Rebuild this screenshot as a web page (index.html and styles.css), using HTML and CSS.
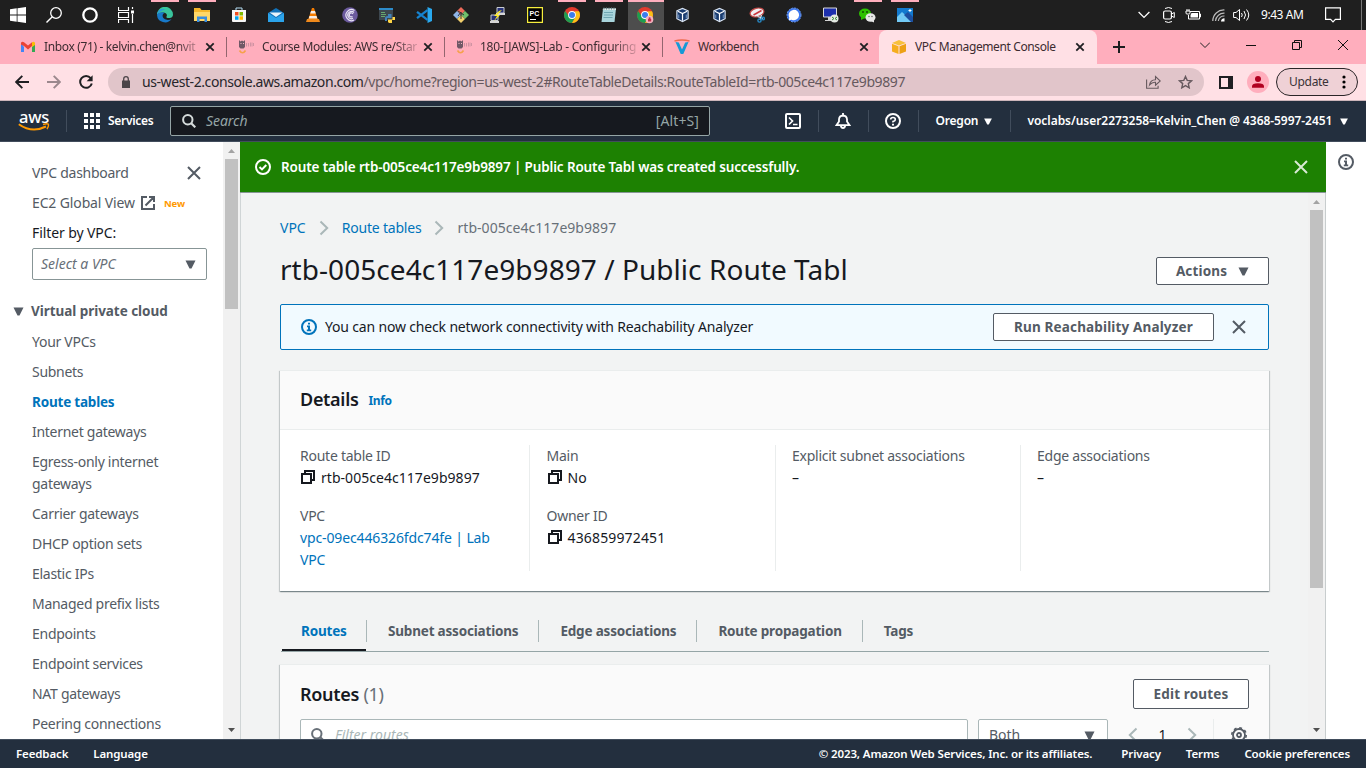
FILE: index.html
```html
<!DOCTYPE html>
<html lang="en">
<head>
<meta charset="utf-8">
<title>VPC Management Console</title>
<link rel="stylesheet" href="styles.css">
</head>
<body>
<svg class="defs" width="0" height="0">
  <defs>
    <symbol id="x" viewBox="0 0 16 16"><path d="M2 2l12 12M14 2L2 14" fill="none" stroke="currentColor" stroke-width="2"/></symbol>
    <symbol id="tabx" viewBox="0 0 10 10"><path d="M1.3 1.3l7.4 7.4M8.7 1.3L1.3 8.7" fill="none" stroke="currentColor" stroke-width="1.8"/></symbol>
    <symbol id="tri" viewBox="0 0 10 9"><path d="M0 .5h10L6 8.500H4z" fill="currentColor"/></symbol>
    <symbol id="chev" viewBox="0 0 10 16"><path d="M1.500 1.500L8.200 8l-6.700 6.500" fill="none" stroke="currentColor" stroke-width="2"/></symbol>
    <symbol id="info" viewBox="0 0 16 16"><circle cx="8" cy="8" r="7" fill="none" stroke="currentColor" stroke-width="2"/><path d="M7 3.700h2v1.800H7zM6 6.500h3v4h1.200v1.700H5.800v-1.700H7V8.200H6z" fill="currentColor"/></symbol>
    <symbol id="copy" viewBox="0 0 14 14"><path d="M1 4h9v9H1zM4 4V1h9v9h-3" fill="none" stroke="currentColor" stroke-width="2"/></symbol>
    <symbol id="mag" viewBox="0 0 14 14"><circle cx="5.800" cy="5.800" r="4.700" fill="none" stroke="currentColor" stroke-width="2"/><path d="M9 9l4.300 4.300" stroke="currentColor" stroke-width="2.200"/></symbol>
    <symbol id="vbox" viewBox="0 0 16 16"><path d="M2 3.500L8 1l6 2.500v8.500L8 15l-6-3z" fill="#173a6e" stroke="#dbe6f5" stroke-width="1.200"/><path d="M3 4l5 2.500L13 4M8 6.500V14" stroke="#fff" stroke-width="1.300" fill="none"/><path d="M4 7.500v4M12 7.500v4" stroke="#7f9fcb"/></symbol>
    <symbol id="chrome" viewBox="0 0 16 16"><circle cx="8" cy="8" r="8" fill="#e33b2e"/><path d="M1.100 4A8 8 0 0 0 8 16l3.500-6L8 8H4z" fill="#1e9e50"/><path d="M15 4.200A8 8 0 0 1 8 16l3.500-6L11 4.200z" fill="#fbc116"/><circle cx="8" cy="8" r="3.900" fill="#fff"/><circle cx="8" cy="8" r="3" fill="#3b7ded"/></symbol>
    <symbol id="awscat" viewBox="0 0 16 16"><path d="M1 1l1.500 1.500L4 1.500 5.500 2.500 7 1v7L5.500 9.500h-3L1 8z" fill="#705866"/><path d="M2.500 4.500h1M5 4.500h1" stroke="#f0b8c4"/><path d="M8.500 4v3.500M10.500 4v3.500M12.500 3.500v4M14 3.500v4M15.500 4v3" stroke="#d093a3" fill="none"/><path d="M1.500 11.500q3 4.500 6 0" stroke="#f5a14a" stroke-width="1.700" fill="none"/></symbol>
  </defs>
</svg>

<header class="taskbar">
  <div class="task sys"><svg width="16" height="16" viewBox="0 0 16 16"><path d="M0 2.300L6.700 1.300V7.600H0zM7.500 1.200L16 0v7.600H7.500zM0 8.400h6.700v6.300L0 13.700zM7.500 8.400H16V16l-8.500-1.200z" fill="#fff"/></svg></div>
  <div class="task sys"><svg width="16" height="16" viewBox="0 0 16 16"><circle cx="10" cy="6" r="5.300" fill="none" stroke="#fff" stroke-width="1.300"/><path d="M6.300 9.700L.5 15.500" stroke="#fff" stroke-width="1.400"/></svg></div>
  <div class="task sys"><svg width="16" height="16" viewBox="0 0 16 16"><circle cx="8" cy="8" r="6.700" fill="none" stroke="#fff" stroke-width="2.300"/></svg></div>
  <div class="task sys"><svg width="16" height="16" viewBox="0 0 16 16"><path d="M.5 0v3.500h10V0M.5 16v-3.500h10V16M.5 5.500h10v5H.5zM14.500 0v2M14.500 7v9" fill="none" stroke="#fff" stroke-width="1.200"/><path d="M13 3.500h3v3h-3z" fill="#fff"/></svg></div>
  <div class="apps">
    <div class="task open"><svg width="16" height="16" viewBox="0 0 16 16"><path d="M0 8a8 8 0 0 1 16-.5c0 3-2.500 3.500-4.500 3.500S9 10 9.700 9.200C10.500 7 8.500 5.500 6 5.500S1 6.500 0 8z" fill="#39c39c"/><path d="M0 8C.5 3.500 4 1 8 2.500 5 3 2 5 0 8z" fill="#2a9bd8"/><path d="M0 8c1-2.500 5-3.700 8-2-3 .5-3 4-1 5.500 2.500 2 5.500 1.500 7.500.5A8 8 0 0 1 0 8z" fill="#1879c9"/></svg></div>
    <div class="task open"><svg width="16" height="14" viewBox="0 0 16 14"><path d="M0 0h6l1.500 2H16v11H0z" fill="#f5b62b"/><path d="M0 4h16v9H0z" fill="#ffd768"/><path d="M3 14V8.500h10V14h-2.500v-3h-5v3z" fill="#3a8ddd"/></svg></div>
    <div class="task"><svg width="16" height="16" viewBox="0 0 16 16"><path d="M5 4V1h6v3" fill="none" stroke="#b7dff5"/><path d="M1 3h14v11q0 1-1 1H2q-1 0-1-1z" fill="#f5f5f5"/><path d="M4 5h3.500v3.500H4z" fill="#f05022"/><path d="M8.500 5H12v3.500H8.500z" fill="#7fba00"/><path d="M4 9.300h3.500v3.500H4z" fill="#00a4ef"/><path d="M8.500 9.300H12v3.500H8.500z" fill="#ffb900"/></svg></div>
    <div class="task"><svg width="16" height="14" viewBox="0 0 16 14"><path d="M0 5l8-5 8 5v9H0z" fill="#1272b9"/><path d="M1.500 4.500h13L8 9z" fill="#e8f4fc"/><path d="M0 5l8 5 8-5v9H0z" fill="#2ba3ea"/></svg></div>
    <div class="task"><svg width="14" height="16" viewBox="0 0 14 16"><path d="M6 1h2l4 12H2z" fill="#f57c00"/><path d="M5 4h4l.8 2.500H4.200zM3.500 9h7l.8 2.500H2.700z" fill="#f7eee6"/><path d="M1 12h12l1 3H0z" fill="#f08a1c"/></svg></div>
    <div class="task"><svg width="16" height="16" viewBox="0 0 16 16"><circle cx="8" cy="8" r="7.800" fill="#6c5b9e"/><path d="M12.500 3.500A5.500 5.500 0 1 0 12 13M12 5.500A3.600 3.600 0 1 0 11 11.300M11 7a2 2 0 1 0-.5 2.500" fill="none" stroke="#e9e5f5" stroke-width="1.200"/></svg></div>
    <div class="task"><svg width="16" height="15" viewBox="0 0 16 15"><path d="M0 0h14v12H0z" fill="#3d474f"/><path d="M0 0h14v2H0z" fill="#2d8bc9"/><path d="M2 4.500h4M2 6.500h5M2 8.500h4" stroke="#67a86f"/><path d="M9 6h3.500v4H8v3H6v-3q0-2 3-2z" fill="#4282b8"/><path d="M10 15h3v-3h3V9h-2.500v2.500H9V14z" fill="#ffd546"/></svg></div>
    <div class="task"><svg width="16" height="16" viewBox="0 0 16 16"><path d="M11.500 0L16 2v12l-4.500 2z" fill="#29a9ef"/><path d="M1 4.800l10.500 8M1 11.200l10.500-8" stroke="#1683d0" stroke-width="2.300"/></svg></div>
    <div class="task"><svg width="16" height="16" viewBox="0 0 16 16"><path d="M8 0l4 4-4 4-4-4z" fill="#ed6a5a"/><path d="M4 4l4 4-4 4-4-4z" fill="#8fb5e8"/><path d="M12 4l4 4-4 4-4-4z" fill="#6fbf6b"/><path d="M8 8l4 4-4 4-4-4z" fill="#f2cf6c"/><path d="M5 4l6 4M8 5v7M8 5L5 9" stroke="#333"/></svg></div>
    <div class="task"><svg width="16" height="16" viewBox="0 0 16 16"><path d="M7 .5h7v5.500H7zM1 8h7v5.500H1z" fill="#28337b" stroke="#c9cdd1"/><path d="M6 7h9M0 15h9" stroke="#d6d6d6" stroke-width="2"/><path d="M12 3L7 8h3l-6 6 3-5H4l5-5z" fill="#ffec27"/></svg></div>
    <div class="task"><svg class="pc" width="16" height="16" viewBox="0 0 16 16"><path d="M.6 .6h14.800v14.800H.6z" fill="#000" stroke="#f6ee3d" stroke-width="1.200"/><text class="pctext" x="2.500" y="9">PC</text><path d="M3 12.500h6" stroke="#fff"/></svg></div>
    <div class="task open"><svg width="16" height="16"><use href="#chrome"/></svg></div>
    <div class="task open"><svg width="16" height="16" viewBox="0 0 16 16"><path d="M2 1.500h13L13.500 15H.5z" fill="#a9d5dc"/><path d="M2 1.500h13l-.2 1.500h-13z" fill="#e5efee"/><path d="M3 5.500h9M3 8h9M2.500 10.500h9" stroke="#6ea6b2"/><path d="M3 .5v2M5.500 .5v2M8 .5v2M10.500 .5v2M13 .5v2" stroke="#627c83"/></svg></div>
    <div class="task open active"><svg width="17" height="17" viewBox="0 0 17 17"><use href="#chrome" width="16" height="16"/><circle cx="12.500" cy="12.500" r="3.800" fill="#f7b3c0"/><path d="M11 12h3.200v2.500H11z" fill="#c02c4b"/><circle cx="12.600" cy="11.300" r="1.100" fill="#c02c4b"/></svg></div>
    <div class="task"><svg width="15" height="16"><use href="#vbox"/></svg></div>
    <div class="task"><svg width="15" height="16"><use href="#vbox"/></svg></div>
    <div class="task"><svg width="16" height="16" viewBox="0 0 16 16"><ellipse cx="8" cy="5.500" rx="7" ry="4.300" fill="#f1f0f3" stroke="#c44a48" stroke-width="1.200" transform="rotate(-14 8 5.500)"/><path d="M4.500 8l8-4.500" stroke="#c9353c" stroke-width="1.500"/><path d="M8.500 9.500l5.500 2M12.500 8l-1.500 5" stroke="#d3e3ee" stroke-width="1.200"/><circle cx="10.500" cy="13.500" r="1.600" fill="none" stroke="#278ac7" stroke-width="1.400"/><circle cx="14" cy="11.500" r="1.400" fill="none" stroke="#278ac7" stroke-width="1.400"/></svg></div>
    <div class="task"><svg width="16" height="16" viewBox="0 0 16 16"><circle cx="8" cy="8" r="7" fill="#3a76f0" stroke="#6c9bf5" stroke-width="1" stroke-dasharray="2 1"/><path d="M2.800 13.200l.5-2.700A5.200 5.200 0 1 1 5.600 12.700z" fill="#fff"/></svg></div>
    <div class="task"><svg width="16" height="16" viewBox="0 0 16 16"><path d="M.5 1h13v9H.5z" fill="#1d2fad" stroke="#dadada"/><path d="M5 10v3H2v1h8v-4z" fill="#d4d4d4"/><circle cx="11.500" cy="11.500" r="4" fill="#e5e9e3"/><path d="M9 10l2 1.500L9 13M14 10l-2 1.500 2 1.500" stroke="#348a38" fill="none"/></svg></div>
    <div class="task open"><svg width="17" height="15" viewBox="0 0 17 15"><ellipse cx="6" cy="5.500" rx="6" ry="5" fill="#2dc100"/><path d="M2 9v3l4-2z" fill="#2dc100"/><ellipse cx="11.500" cy="9.500" rx="5" ry="4.200" fill="#e8e8e8"/><path d="M15 12v2.500l-3-1.500z" fill="#e8e8e8"/><circle cx="4" cy="4" r=".8"/><circle cx="8" cy="4" r=".8"/><circle cx="10" cy="8.500" r=".7" fill="#555"/><circle cx="13" cy="8.500" r=".7" fill="#555"/></svg></div>
    <div class="task open"><svg width="16" height="14" viewBox="0 0 16 14"><path d="M0 0h16v14H0z" fill="#1279cf"/><path d="M0 9l5-5 11 10H0z" fill="#72c9f4"/><path d="M7 7l4-3 5 5v5h-2z" fill="#1c4fa0"/><path d="M13 1v3M11.500 2.500h3" stroke="#fff"/></svg></div>
  </div>
  <div class="tray">
    <svg width="12" height="8" viewBox="0 0 12 8"><path d="M.6 1L6 6.400 11.400 1" stroke="#fff" stroke-width="1.300" fill="none"/></svg>
    <svg width="12" height="16" viewBox="0 0 12 16"><path d="M2 1.500Q5.500-.5 9 1.500M2 14.500q3.500 2 7 0" fill="none" stroke="#fff"/><rect x=".6" y="4" width="7.800" height="8" rx="1.500" fill="none" stroke="#fff" stroke-width="1.200"/><path d="M8.500 7l2.800-1.500v5L8.500 9" fill="none" stroke="#fff"/></svg>
    <svg width="16" height="12" viewBox="0 0 16 12"><path d="M5 2.500h9.500v7.500H3.500V6M1 2h4M2 0v2M4 0v2M1 2v2q0 1 1 1h2q1 0 1-1V2M14.500 5h1v3h-1" fill="none" stroke="#fff"/><path d="M6.500 4h6.500v4.500H5.500V6z" fill="#fff"/></svg>
    <svg width="13" height="13" viewBox="0 0 13 13"><path d="M.8 12A11 11 0 0 1 12.500 1M3.500 12A8.500 8.500 0 0 1 12.500 4.200M6.300 12A6 6 0 0 1 12.500 7" fill="none" stroke="#bbb" stroke-width="1.200"/><path d="M9 12.500q0-3 3.500-3.200v3.200z" fill="#fff"/></svg>
    <svg width="17" height="14" viewBox="0 0 17 14"><path d="M.6 4.500H3L6.500 1.500v11L3 9.500H.6zM8.500 5q1.500 2 0 4M11 3q3 4 0 8M13.500 1.500q4.500 5.500 0 11" fill="none" stroke="#fff"/></svg>
    <span class="clock">9:43 AM</span>
    <svg class="notif" width="16" height="16" viewBox="0 0 16 16"><path d="M.6 .8h14.800v11.600h-5L8 14.800l-2.400-2.400h-5z" fill="none" stroke="#fff" stroke-width="1.200"/></svg>
    <i class="peek"></i>
  </div>
</header>

<div class="tabstrip">
  <div class="tab"><svg class="fav" width="16" height="12" viewBox="0 0 16 12"><path d="M1 2v9h3V6z" fill="#4285f4"/><path d="M15 2v9h-3V6z" fill="#34a853"/><path d="M1 3.500V1.800Q2 0 4 1.300L8 4.500l4-3.200v3.800L8 8.500 4 5z" fill="#ea4335"/><path d="M12 1.300Q14 0 15 1.800V4l-3 2z" fill="#fbbc04"/></svg><span class="title t1">Inbox (71) - kelvin.chen@nvit</span><svg class="tx" width="10" height="10"><use href="#tabx"/></svg></div>
  <div class="tab"><svg class="fav" width="16" height="16"><use href="#awscat"/></svg><span class="title t2">Course Modules: AWS re/Star</span><svg class="tx" width="10" height="10"><use href="#tabx"/></svg></div>
  <div class="tab"><svg class="fav" width="16" height="16"><use href="#awscat"/></svg><span class="title t3">180-[JAWS]-Lab - Configuring</span><svg class="tx" width="10" height="10"><use href="#tabx"/></svg></div>
  <div class="tab last"><svg class="fav" width="16" height="16" viewBox="0 0 16 16"><path d="M1.500 3l3.300.5L8 10.500l3.200-7 3.300-.5L9.300 15H6.700z" fill="#1699d6"/><path d="M.5 2Q8 0 15.500 2" fill="none" stroke="#ef6a4c" stroke-width="1.300"/></svg><span class="title t4">Workbench</span><svg class="tx" width="10" height="10"><use href="#tabx"/></svg></div>
  <div class="tab current"><svg class="fav" width="16" height="16" viewBox="0 0 16 16"><path d="M1 4l7-3 7 3-7 2.500z" fill="#f7c03c"/><path d="M1 4.700l6.500 2.500V15L1 12.500z" fill="#f5ad1f"/><path d="M15 4.700L8.500 7.200V15l6.500-2.500z" fill="#eda016"/></svg><span class="title t5">VPC Management Console</span><svg class="tx" width="10" height="10"><use href="#tabx"/></svg></div>
  <svg class="plus" width="12" height="12" viewBox="0 0 12 12"><path d="M6 0v12M0 6h12" stroke="#1d1d1f" stroke-width="2"/></svg>
  <div class="wincontrols">
    <svg width="10" height="10" viewBox="0 0 10 10"><path d="M0 2.500l5 5 5-5" fill="none" stroke="#222"/></svg>
    <svg width="10" height="10" viewBox="0 0 10 10"><path d="M0 5.500h10" stroke="#111"/></svg>
    <svg width="10" height="10" viewBox="0 0 10 10"><path d="M.5 2.500h7v7h-7zM2.500 2.500v-2h7v7h-2" fill="none" stroke="#111"/></svg>
    <svg width="10" height="10" viewBox="0 0 10 10"><path d="M0 0l10 10M10 0L0 10" stroke="#111"/></svg>
  </div>
</div>

<div class="toolbar">
  <svg class="nav" width="14" height="14" viewBox="0 0 14 14"><path d="M14 7H1.500M7.300 .8L1.200 7l6.100 6.200" fill="none" stroke="#1f1f22" stroke-width="1.900"/></svg>
  <svg class="nav" width="14" height="14" viewBox="0 0 14 14"><path d="M0 7h12.500M6.700 .8L12.800 7l-6.100 6.200" fill="none" stroke="#9b888d" stroke-width="1.900"/></svg>
  <svg class="nav" width="14" height="14" viewBox="0 0 14 14"><path d="M11.700 3.200A5.900 5.900 0 1 0 12.800 8.500" fill="none" stroke="#1f1f22" stroke-width="2"/><path d="M13.600 .2v6H7.600z" fill="#1f1f22"/></svg>
  <div class="address">
    <svg width="8" height="12" viewBox="0 0 8 12"><path d="M0 4.500h8V12H0z" fill="#4c4549"/><path d="M1.700 5V3a2.300 2.300 0 0 1 4.600 0v2" fill="none" stroke="#4c4549" stroke-width="1.300"/></svg>
    <span class="url"><b>us-west-2.console.aws.amazon.com</b>/vpc/home?region=us-west-2#RouteTableDetails:RouteTableId=rtb-005ce4c117e9b9897</span>
    <svg class="share" width="15" height="14" viewBox="0 0 15 14"><path d="M.6 4.500v8.800h11.500v-2.500M3.500 10q.8-5 6-5.200V1.500L14.300 6 9.500 10.200V7.300Q6 7 3.500 10z" fill="none" stroke="#66595e" stroke-width="1.100"/></svg>
    <svg width="15" height="14" viewBox="0 0 15 14"><path d="M7.500 1.500l1.700 3.900 4.300.4-3.200 2.800.9 4.200-3.700-2.200-3.700 2.200.9-4.200L1.500 5.800l4.300-.4z" fill="none" stroke="#66595e" stroke-width="1.400"/></svg>
  </div>
  <svg class="panel" width="14" height="13" viewBox="0 0 14 13"><path d="M1 1h12v11H1z" fill="none" stroke="#1f1f22" stroke-width="2"/><path d="M9 1h4v11H9z" fill="#1f1f22"/></svg>
  <svg class="avatar" width="22" height="22" viewBox="0 0 22 22"><circle cx="11" cy="11" r="11" fill="#ffaebd"/><circle cx="11" cy="8" r="3" fill="#b00020"/><path d="M5 16.800v-1.500q0-3 6-3t6 3v1.500z" fill="#b00020"/></svg>
  <div class="update"><span>Update</span><svg width="4" height="14" viewBox="0 0 4 14"><circle cx="2" cy="2" r="1.600"/><circle cx="2" cy="7" r="1.600"/><circle cx="2" cy="12" r="1.600"/></svg></div>
</div>

<nav class="aws">
  <div class="logo"><span>aws</span><svg width="32" height="9" viewBox="0 0 32 9"><path d="M.8 1.200Q14 10.500 28 3.500" fill="none" stroke="#f90" stroke-width="2"/><path d="M25 1.500q4-1.300 5.300-.4.700 2-1.300 5" fill="none" stroke="#f90" stroke-width="1.400"/></svg></div>
  <i class="vsep s1"></i>
  <svg class="grid" width="16" height="16" viewBox="0 0 16 16"><path d="M0 0h4v4H0zM6 0h4v4H6zM12 0h4v4h-4zM0 6h4v4H0zM6 6h4v4H6zM12 6h4v4h-4zM0 12h4v4H0zM6 12h4v4H6zM12 12h4v4h-4z" fill="#fff"/></svg>
  <span class="services">Services</span>
  <div class="search"><svg width="14" height="14"><use href="#mag"/></svg><em>Search</em><span>[Alt+S]</span></div>
  <div class="icons">
    <svg width="16" height="16" viewBox="0 0 16 16"><rect x="1" y="1" width="14" height="14" rx="1" fill="none" stroke="#fff" stroke-width="2"/><path d="M4 4.500L7.500 8 4 11.500M8 11.500h4.500" fill="none" stroke="#fff" stroke-width="1.700"/></svg>
    <i class="vsep"></i>
    <svg width="16" height="16" viewBox="0 0 16 16"><path d="M8 0v2M1.500 12.200h13L12 8.500V6.300Q11.700 2.700 8 2.500 4.300 2.700 4 6.300v2.200zM5.800 12.500q.5 2.500 2.200 2.500t2.200-2.500" fill="none" stroke="#fff" stroke-width="1.800"/></svg>
    <i class="vsep"></i>
    <svg width="16" height="16" viewBox="0 0 16 16"><circle cx="8" cy="8" r="7" fill="none" stroke="#fff" stroke-width="2"/><path d="M5.700 6.500Q5.700 4.500 8 4.500t2.300 1.800Q10.300 8 8 8.500v1" fill="none" stroke="#fff" stroke-width="1.600"/><path d="M7 10.700h2v1.800H7z" fill="#fff"/></svg>
    <i class="vsep"></i>
  </div>
  <span class="region">Oregon</span><svg class="ntri" width="8" height="7"><use href="#tri"/></svg>
  <i class="vsep s2"></i>
  <span class="user">voclabs/user2273258=Kelvin_Chen @ 4368-5997-2451</span><svg class="ntri" width="8" height="7"><use href="#tri"/></svg>
</nav>

<div class="body">
  <aside class="side">
    <div class="row"><span class="vd">VPC dashboard</span><svg class="gx" width="16" height="16"><use href="#x"/></svg></div>
    <div class="row ec2"><span>EC2 Global View</span><svg width="14" height="14" viewBox="0 0 14 14"><path d="M6 1H1v12h12V8M4.500 9.500L12.500 1.500M8 1h5v5" fill="none" stroke="#545b64" stroke-width="2"/></svg><b>New</b></div>
    <div class="row dark">Filter by VPC:</div>
    <div class="select vpcsel"><em>Select a VPC</em><svg width="11" height="9"><use href="#tri"/></svg></div>
    <div class="group"><svg width="11" height="9"><use href="#tri"/></svg><b>Virtual private cloud</b></div>
    <ul class="links">
      <li>Your VPCs</li><li>Subnets</li><li class="sel">Route tables</li><li>Internet gateways</li><li>Egress-only internet<br>gateways</li><li>Carrier gateways</li><li>DHCP option sets</li><li>Elastic IPs</li><li>Managed prefix lists</li><li>Endpoints</li><li>Endpoint services</li><li>NAT gateways</li><li>Peering connections</li>
    </ul>
  </aside>
  <div class="bar sidebar-scroll"><svg class="up" width="7" height="4" viewBox="0 0 7 4"><path d="M0 4l3.500-4L7 4z" fill="#a3a3a3"/></svg><i></i><svg class="down" width="7" height="4" viewBox="0 0 7 4"><path d="M0 0h7L3.500 4z" fill="#505050"/></svg></div>

  <div class="center">
    <div class="flash"><svg width="16" height="16" viewBox="0 0 16 16"><circle cx="8" cy="8" r="7" fill="none" stroke="#fff" stroke-width="2"/><path d="M4.500 8l2.500 2.400 4.300-4.400" fill="none" stroke="#fff" stroke-width="2"/></svg><span>Route table rtb-005ce4c117e9b9897 | Public Route Tabl was created successfully.</span><svg class="fx" width="16" height="16"><use href="#x"/></svg></div>
    <div class="scroller">
      <main>
        <div class="crumbs"><a>VPC</a><svg width="10" height="16"><use href="#chev"/></svg><a>Route tables</a><svg width="10" height="16"><use href="#chev"/></svg><span>rtb-005ce4c117e9b9897</span></div>
        <div class="head"><h1>rtb-005ce4c117e9b9897 / Public Route Tabl</h1><div class="btn actions">Actions<svg width="11" height="9"><use href="#tri"/></svg></div></div>
        <div class="notice"><svg width="16" height="16"><use href="#info"/></svg><span>You can now check network connectivity with Reachability Analyzer</span><div class="btn run">Run Reachability Analyzer</div><svg class="nx" width="16" height="16"><use href="#x"/></svg></div>
        <section class="card details">
          <div class="cardhead"><h2>Details</h2><b>Info</b></div>
          <div class="cols">
            <div class="col"><label>Route table ID</label><p class="id"><svg width="14" height="14"><use href="#copy"/></svg>rtb-005ce4c117e9b9897</p><label class="second">VPC</label><p class="link">vpc-09ec446326fdc74fe | Lab<br>VPC</p></div>
            <div class="col"><label>Main</label><p><svg width="14" height="14"><use href="#copy"/></svg>No</p><label class="second">Owner ID</label><p class="id owner"><svg width="14" height="14"><use href="#copy"/></svg>436859972451</p></div>
            <div class="col"><label>Explicit subnet associations</label><p>–</p></div>
            <div class="col"><label>Edge associations</label><p>–</p></div>
          </div>
        </section>
        <div class="tabs"><span class="on">Routes</span><span>Subnet associations</span><span>Edge associations</span><span>Route propagation</span><span>Tags</span></div>
        <section class="card routes">
          <div class="rhead"><h2>Routes <span>(1)</span></h2><div class="btn edit">Edit routes</div></div>
          <div class="filters">
            <div class="input"><svg width="14" height="14"><use href="#mag"/></svg><em>Filter routes</em></div>
            <div class="select both"><span>Both</span><svg width="11" height="9"><use href="#tri"/></svg></div>
            <div class="pager"><svg class="prev" width="10" height="16"><use href="#chev"/></svg><span>1</span><svg width="10" height="16"><use href="#chev"/></svg></div>
            <svg class="gear" width="16" height="16" viewBox="0 0 16 16"><circle cx="8" cy="8" r="6" fill="none" stroke="#545b64" stroke-width="1.800"/><circle cx="8" cy="8" r="7.200" fill="none" stroke="#545b64" stroke-width="1.600" stroke-dasharray="2.830 2.830"/><circle cx="8" cy="8" r="2" fill="none" stroke="#545b64" stroke-width="1.800"/></svg>
          </div>
        </section>
      </main>
      <div class="bar main-scroll"><svg class="up" width="7" height="4" viewBox="0 0 7 4"><path d="M0 4l3.500-4L7 4z" fill="#a3a3a3"/></svg><i></i><svg class="down" width="7" height="4" viewBox="0 0 7 4"><path d="M0 0h7L3.500 4z" fill="#505050"/></svg></div>
    </div>
  </div>
  <div class="tools"><svg width="16" height="16"><use href="#info"/></svg></div>
</div>

<footer class="foot"><span>Feedback</span><span class="lang">Language</span><span class="copy">© 2023, Amazon Web Services, Inc. or its affiliates.</span><span class="priv">Privacy</span><span class="terms">Terms</span><span class="cookie">Cookie preferences</span></footer>
</body>
</html>
```
FILE: styles.css
```css
* { box-sizing: border-box; }
html, body { margin: 0; }
body { width: 1366px; height: 768px; overflow: hidden; display: flex; flex-direction: column; font: 14px/22px "Noto Sans", "Open Sans", sans-serif; color: #16191f; background: #fff; }
svg { display: block; flex: none; }
.defs { position: absolute; }
span, b, em, h1, h2, label, p, .btn { white-space: nowrap; }
h1, h2, p { margin: 0; }

.taskbar { height: 30px; flex: none; background: #1f1f1f; display: flex; }
.task { width: 37px; height: 30px; display: flex; align-items: center; justify-content: center; border-top: 2px solid transparent; padding-bottom: 2px; }
.task.sys { width: 36px; }
.apps { display: flex; margin-left: 2px; }
.task.open { background: linear-gradient(#ffaebd, #ffaebd) center -2px / 28px 2px no-repeat; background-origin: padding-box; background-clip: border-box; }
.task.active { background: linear-gradient(#ffaebd, #ffaebd) 1px -2px / 36px 2px no-repeat, linear-gradient(90deg, transparent 1px, #4d4d4d 1px); background-clip: border-box; }
.pctext { font: bold 7px "Liberation Sans", sans-serif; fill: #fff; }
.tray { display: flex; align-items: center; margin-left: auto; padding-right: 4px; }
.tray svg:nth-child(2) { margin-left: 13px; }
.tray svg:nth-child(3) { margin-left: 10px; }
.tray svg:nth-child(4) { margin-left: 11px; }
.tray svg:nth-child(5) { margin-left: 8px; }
.clock { width: 44px; margin-left: 11px; font-size: 12px; letter-spacing: -.45px; color: #fff; }
.tray .notif { margin-left: 20px; }
.peek { width: 1px; height: 30px; margin-left: 20px; background: #777; }

.tabstrip { height: 34px; flex: none; background: #ffaebd; display: flex; padding-left: 9px; align-items: center; }
.tab { width: 218px; height: 34px; display: flex; align-items: center; padding-left: 11px; position: relative; }
.tab::after { content: ""; position: absolute; right: 0; top: 7px; width: 1px; height: 20px; background: #94656f; }
.tab.last { width: 216px; }
.tab.last::after, .tab.current::after { display: none; }
.tab.current { background: #ffe0e5; border-radius: 8px 8px 0 0; padding-left: 12px; }
.title { width: 157px; margin-left: 8px; font-size: 12px; letter-spacing: -.25px; color: #3c2b30; -webkit-mask-image: linear-gradient(90deg, #000 132px, rgba(0, 0, 0, .15) 157px); }
.title.t1 { letter-spacing: -.36px; }
.title.t2 { letter-spacing: -.35px; }
.title.t4, .title.t5 { -webkit-mask-image: none; letter-spacing: -.38px; }
.title.t5 { width: 156px; }
.tx { margin-left: 4px; color: #1f1f22; }
.plus { margin-left: 16px; }
.wincontrols { margin-left: auto; display: flex; gap: 36px; padding-right: 18px; margin-bottom: 5px; }

.toolbar { height: 37px; flex: none; background: #ffe0e5; border-bottom: 1px solid #cdb6bb; display: flex; align-items: center; padding-left: 15px; }
.nav { margin-right: 18px; }
.address { width: 1096px; height: 28px; margin-left: -3px; border-radius: 14px; background: #e1c5ca; display: flex; align-items: center; padding: 0 11px 0 14px; }
.url { margin-left: 12px; font-size: 14px; letter-spacing: -.42px; color: #66595e; }
.url b { font-weight: 400; color: #27262b; }
.share { margin-left: auto; margin-right: 17px; }
.panel { margin-left: 15px; }
.avatar { margin-left: 14px; }
.update { width: 82px; height: 28px; margin-left: 7px; border: 1px solid #2a2528; border-radius: 14px; background: #efd1d6; display: flex; align-items: center; justify-content: space-between; padding: 0 11px 0 12px; font-size: 12px; letter-spacing: -.3px; color: #3a3236; }

.aws { height: 41px; flex: none; background: #232f3e; border-bottom: 1px solid #414d5c; color: #fff; display: flex; align-items: center; font-size: 12px; font-weight: 600; letter-spacing: -.05px; }
.logo { width: 32px; margin-left: 18px; display: flex; flex-direction: column; }
.logo span { font: 500 16.500px/13px "Noto Sans", sans-serif; letter-spacing: -.2px; height: 13px; padding-left: 1px; }
.vsep { width: 1px; height: 22px; background: #414d5c; }
.s1 { margin-left: 16px; }
.grid { margin-left: 17px; }
.services { width: 46px; margin: 0 16px 0 8px; letter-spacing: -.3px; }
.search { width: 540px; height: 30px; border: 1px solid #95a5a6; border-radius: 2px; background: #16191f; display: flex; align-items: center; padding: 0 10px 0 11px; font-size: 14px; font-weight: 400; color: #95a5a6; }
.search svg { color: #d5dbdb; margin-right: 10px; }
.search span { margin-left: auto; letter-spacing: .1px; }
.icons { margin-left: 75px; display: flex; align-items: center; gap: 16.500px; }
.region { width: 42px; margin-left: 17px; letter-spacing: -.2px; }
.ntri { margin-left: 6px; }
.s2 { margin-left: 18px; }
.user { width: 306px; margin-left: 17px; }

.body { height: 597px; flex: none; display: flex; overflow: hidden; }
.side { width: 223px; padding: 20px 0 0 32px; color: #545b64; overflow: hidden; letter-spacing: -.28px; }
.row { height: 22px; margin-bottom: 8px; display: flex; align-items: center; }
.gx { margin-left: auto; margin-right: 21px; }
.ec2 { letter-spacing: -.13px; }
.ec2 svg { margin-left: 6px; }
.ec2 b { margin: 2px 0 0 9px; font-size: 9.500px; color: #ff9900; }
.row.dark { margin-bottom: 4px; color: #16191f; letter-spacing: -.1px; }
.select { border: 1px solid #879596; border-radius: 2px; background: #fff; display: flex; align-items: center; justify-content: space-between; height: 32px; padding: 0 10px 0 8px; color: #545b64; }
.vpcsel { width: 175px; letter-spacing: 0; }
.vpcsel em { color: #687078; }
.group { height: 22px; margin: 20px 0 9px -19px; display: flex; align-items: center; gap: 7px; }
.group b { font-size: 13.500px; letter-spacing: -.05px; }
.links { margin: 0; padding: 0; list-style: none; }
.links li { margin-bottom: 8px; white-space: nowrap; }
.links .sel { color: #0073bb; font-weight: 700; font-size: 13.500px; letter-spacing: -.2px; }
.bar { width: 17px; flex: none; background: #f1f1f1; display: flex; flex-direction: column; align-items: center; }
.bar .up { margin-top: 7px; }
.bar i { width: 13px; margin-top: 6px; background: #c1c1c1; }
.bar .down { margin-top: auto; margin-bottom: 7px; }
.sidebar-scroll i { height: 150px; }

.center { width: 1086px; display: flex; flex-direction: column; border-left: 1px solid #d0d5d6; border-right: 1px solid #c8cdce; background: #f2f3f3; }
.flash { height: 51px; flex: none; margin: 0 -1px; background: #1d8102; border-bottom: 1px solid #879596; color: #fff; display: flex; align-items: center; padding: 0 17px 0 15px; font-size: 13.500px; font-weight: 600; letter-spacing: -.14px; }
.flash span { margin-left: 10px; }
.fx { margin-left: auto; color: #d9ead5; }
.scroller { flex: 1; display: flex; min-height: 0; }
main { width: 1067px; padding: 24px 38px 0 39px; overflow: hidden; }
.main-scroll { margin-left: 1px; }
.main-scroll i { height: 378px; }
.crumbs { height: 22px; display: flex; align-items: center; color: #687078; letter-spacing: .04px; }
.crumbs a { color: #0073bb; letter-spacing: -.2px; }
.crumbs a:first-child { letter-spacing: 0; }
.crumbs svg { color: #aab7b8; margin: 0 13px; }
.head { height: 28px; margin-top: 18px; display: flex; align-items: center; justify-content: space-between; width: 989px; }
h1 { font-size: 28px; font-weight: 400; line-height: 28px; margin-top: -4px; letter-spacing: .05px; }
.btn { height: 28px; border: 1px solid #545b64; border-radius: 2px; background: #fff; color: #545b64; font-size: 13.500px; font-weight: 700; letter-spacing: .15px; display: flex; align-items: center; justify-content: center; }
.actions { width: 113px; gap: 11px; }
.notice { width: 989px; height: 46px; margin-top: 19px; border: 1px solid #0073bb; border-radius: 2px; background: #f1faff; display: flex; align-items: center; padding: 0 21px 0 20px; letter-spacing: -.17px; }
.notice > svg:first-child { color: #0073bb; margin-right: 8px; }
.notice .run { width: 221px; margin-left: auto; }
.nx { margin-left: 17px; color: #545b64; }
.card { width: 989px; background: #fff; box-shadow: 0 1px 1px 0 rgba(0, 28, 36, .3), 1px 1px 1px 0 rgba(0, 28, 36, .15), -1px 1px 1px 0 rgba(0, 28, 36, .15); border-top: 1px solid #eaeded; }
.details { height: 221px; margin-top: 20px; }
.cardhead { height: 59px; background: #fafafa; border-bottom: 1px solid #eaeded; display: flex; align-items: center; padding: 0 0 2px 20px; }
h2 { font-size: 18px; font-weight: 600; letter-spacing: -.3px; }
.cardhead b { margin: 4px 0 0 10px; font-size: 12px; letter-spacing: -.35px; color: #0073bb; }
.cols { display: grid; grid-template-columns: 230px 246px 245px 1fr; height: 126px; margin: 15px 20px 0; }
.col { border-right: 1px solid #eaeded; padding-left: 16.500px; }
.col:first-child { padding-left: 0; }
.col:nth-child(n+3) { padding-left: 16px; }
.col:last-child { border: 0; }
.col label { display: block; color: #545b64; letter-spacing: -.25px; }
.col .second { margin-top: 16px; }
.col p { display: block; }
.col .id { letter-spacing: .04px; }
.col .owner { letter-spacing: .15px; }
.col p svg { display: inline-block; vertical-align: -1px; margin: 0 6px 0 1px; }
.col .link { color: #0073bb; letter-spacing: -.13px; }
.tabs { width: 988px; height: 32px; margin: 29px 0 0 1px; border-bottom: 1px solid #95a5a6; display: flex; color: #545b64; font-size: 13.500px; font-weight: 700; letter-spacing: -.19px; }
.tabs span { height: 22px; padding: 0 20px 0 21px; border-right: 1px solid #aab7b8; }
.tabs span:last-child { border: 0; }
.tabs .on { color: #0073bb; width: 86px; padding-left: 20px; position: relative; }
.tabs .on::after { content: ""; position: absolute; left: 1px; bottom: -9px; width: 84px; height: 2px; background: #16191f; }
.routes { height: 120px; margin-top: 12px; background: #fafafa; }
.rhead { display: flex; justify-content: space-between; align-items: center; padding: 14px 20px 0; height: 44px; }
.rhead h2 span { color: #687078; font-weight: 400; }
.edit { width: 116px; height: 30px; }
.filters { display: flex; align-items: center; padding: 0 22px 0 20px; margin-top: 10px; }
.input { width: 668px; height: 32px; border: 1px solid #aab7b8; border-radius: 2px; background: #fff; display: flex; align-items: center; padding-left: 10px; color: #687078; }
.input em { margin-left: 10px; color: #aab7b8; }
.both { width: 130px; margin-left: 10px; border-color: #aab7b8; padding: 0 12px 0 10px; }
.pager { display: flex; align-items: center; gap: 20.500px; margin-left: 20px; padding-right: 16px; border-right: 1px solid #eaeded; height: 32px; color: #16191f; }
.pager svg { color: #aab7b8; }
.pager .prev { transform: scaleX(-1); }
.gear { margin-left: auto; }
.tools { width: 40px; display: flex; justify-content: center; padding-top: 12px; color: #545b64; background: #fff; }

.foot { height: 29px; flex: none; background: #232f3e; border-top: 1px solid #414d5c; color: #fff; display: flex; align-items: center; font-size: 11.500px; font-weight: 600; letter-spacing: -.13px; padding: 0 16px; }
.foot .lang { margin-left: 25px; }
.foot .copy { margin-left: auto; }
.foot .priv { margin-left: 29px; }
.foot .terms { margin-left: 25px; }
.foot .cookie { margin-left: 25px; }
```
